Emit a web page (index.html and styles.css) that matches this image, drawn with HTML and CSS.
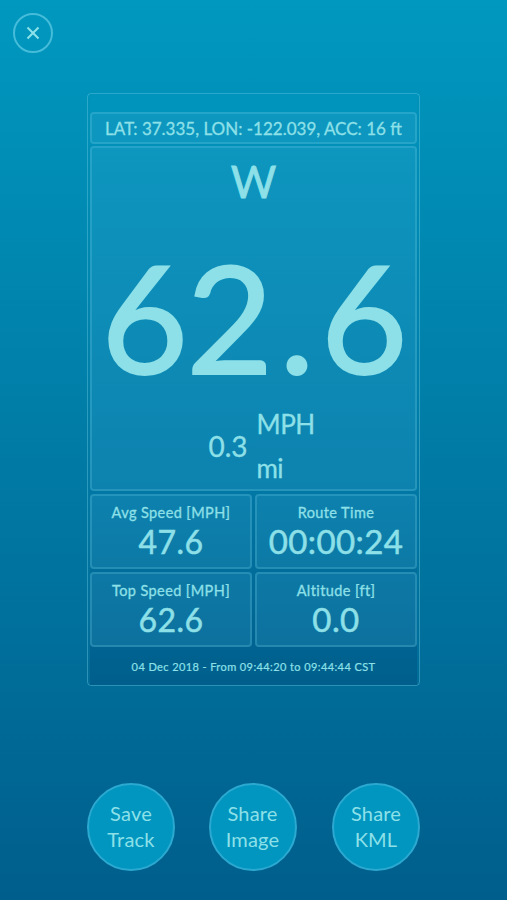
FILE: index.html
```html
<!DOCTYPE html>
<html lang="en">
<head>
    <meta charset="UTF-8">
    <meta name="viewport" content="width=device-width, initial-scale=1.0">
    <title>Speed Track</title>
    <link rel="stylesheet" href="styles.css">
</head>
<body>
    <button class="close" aria-label="Close">
        <svg width="14" height="14" viewBox="0 0 14 14"><path d="M1.5 1.5 12.5 12.5M12.5 1.5 1.5 12.5"/></svg>
    </button>

    <div class="card">
        <div class="screen">
            <div class="panel location"><span>LAT: 37.335, LON: -122.039, ACC: 16 ft</span></div>
            <div class="panel speed">
                <div class="heading">W</div>
                <div class="big-speed">62<span class="dot">.</span>6</div>
                <div class="distance">
                    <span class="miles">0.3</span>
                    <div class="units">
                        <span class="mph">MPH</span>
                        <span class="mi">mi</span>
                    </div>
                </div>
            </div>
            <div class="stats">
                <div class="panel stat">
                    <div class="label">Avg Speed [MPH]</div>
                    <div class="value wide">47.6</div>
                </div>
                <div class="panel stat">
                    <div class="label">Route Time</div>
                    <div class="value">00:00:24</div>
                </div>
                <div class="panel stat">
                    <div class="label">Top Speed [MPH]</div>
                    <div class="value wide">62.6</div>
                </div>
                <div class="panel stat">
                    <div class="label">Altitude [ft]</div>
                    <div class="value">0.0</div>
                </div>
            </div>
            <div class="date">04 Dec 2018 - From 09:44:20 to 09:44:44 CST</div>
        </div>
    </div>

    <div class="actions">
        <button class="round">Save<br>Track</button>
        <button class="round">Share<br>Image</button>
        <button class="round">Share<br>KML</button>
    </div>
</body>
</html>
```

FILE: styles.css
```css
* {
    box-sizing: border-box;
}
body {
    margin: 0;
    height: 900px;
    padding-top: 13px;
    overflow: hidden;
    background: linear-gradient(#0098bf, #005e8c);
    font-family: Lato, "Open Sans", sans-serif;
    color: #8de0e8;
}
button {
    font-family: inherit;
    color: inherit;
    padding: 0;
}
.close {
    display: flex;
    align-items: center;
    justify-content: center;
    width: 40px;
    height: 40px;
    margin-left: 13px;
    background: none;
    border: 2px solid #45bcd9;
    border-radius: 50%;
}
.close path {
    stroke: #8de3ea;
    stroke-width: 2;
    fill: none;
}
.card {
    width: 333px;
    height: 593px;
    margin: 40px 0 0 87px;
    padding: 0 2px;
    border: 1px solid rgba(110, 205, 228, 0.4);
    border-radius: 4px;
}
.screen {
    height: 100%;
    padding-top: 18px;
    background: linear-gradient(#0094bc, #0079a7 65%, #005e8c);
}
.panel {
    background: rgba(70, 180, 215, 0.18);
    border: 2px solid rgba(110, 205, 228, 0.25);
    border-radius: 4px;
    -webkit-text-stroke: 0.3px #8de0e8;
}
.location {
    display: flex;
    align-items: center;
    justify-content: center;
    height: 32px;
    margin-bottom: 2px;
    font-size: 17px;
    letter-spacing: 0;
    white-space: nowrap;
}
.speed {
    display: flex;
    flex-direction: column;
    align-items: center;
    height: 345px;
    margin-bottom: 3px;
}
.heading {
    margin-top: 7px;
    font-size: 44px;
    line-height: 52px;
    -webkit-text-stroke-width: 0.8px;
}
.big-speed {
    margin-top: 33px;
    font-size: 150px;
    line-height: 152px;
    white-space: nowrap;
    letter-spacing: -2px;
    -webkit-text-stroke-width: 2px;
}
.dot {
    margin: 0 8px;
}
.distance {
    display: flex;
    align-items: center;
    gap: 9px;
    margin: 10px 0 0 16px;
    font-size: 28px;
}
.units {
    display: flex;
    flex-direction: column;
    line-height: 44px;
    font-size: 26px;
    letter-spacing: -0.5px;
}
.stats {
    display: grid;
    grid-template-columns: 162px 162px;
    grid-auto-rows: 75px;
    gap: 3px;
}
.stat {
    padding-top: 7px;
    text-align: center;
    white-space: nowrap;
}
.label {
    font-size: 14.5px;
    line-height: 20px;
    letter-spacing: 0.4px;
}
.value {
    font-size: 33px;
    line-height: 37px;
    letter-spacing: 0.4px;
    -webkit-text-stroke-width: 0.5px;
}
.wide {
    font-size: 32px;
}
.date {
    margin-top: 13px;
    text-align: center;
    font-size: 11px;
    line-height: 14px;
    letter-spacing: 0.4px;
    -webkit-text-stroke: 0.2px #8de0e8;
}
.actions {
    display: flex;
    justify-content: space-between;
    width: 333px;
    margin: 97px 0 0 87px;
}
.round {
    width: 88px;
    height: 88px;
    padding-bottom: 3px;
    background: #0096c0;
    border: 2px solid #2ba9d0;
    border-radius: 50%;
    font-size: 20px;
    line-height: 26px;
    letter-spacing: 0.2px;
}
.round:nth-child(2) {
    margin-right: 2px;
}
```
